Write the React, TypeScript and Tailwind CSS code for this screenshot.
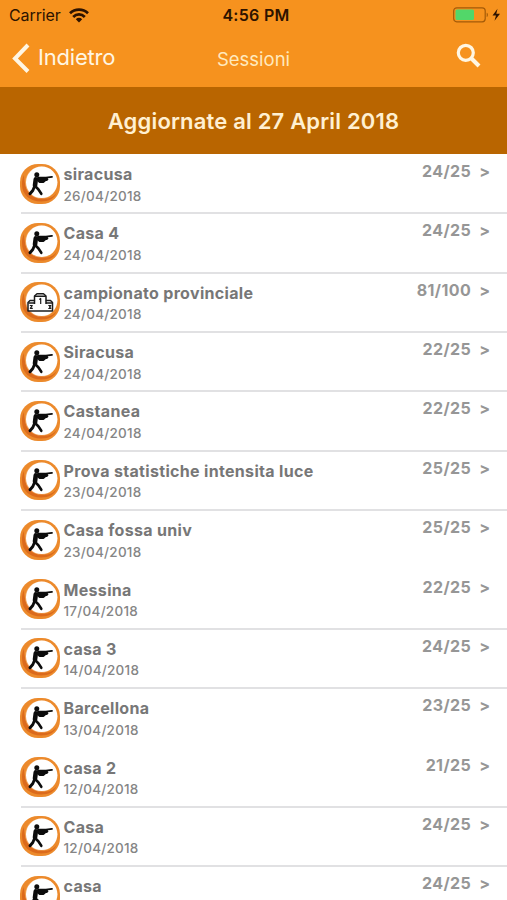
type Kind = "shooter" | "podium";

interface Session {
  name: string;
  date?: string;
  score: string;
  kind?: Kind;
  noLine?: boolean;
}

const sessions: Session[] = [
  { name: "siracusa", date: "26/04/2018", score: "24/25" },
  { name: "Casa 4", date: "24/04/2018", score: "24/25" },
  { name: "campionato provinciale", date: "24/04/2018", score: "81/100", kind: "podium" },
  { name: "Siracusa", date: "24/04/2018", score: "22/25" },
  { name: "Castanea", date: "24/04/2018", score: "22/25" },
  { name: "Prova statistiche intensita luce", date: "23/04/2018", score: "25/25" },
  { name: "Casa fossa univ", date: "23/04/2018", score: "25/25", noLine: true },
  { name: "Messina", date: "17/04/2018", score: "22/25" },
  { name: "casa 3", date: "14/04/2018", score: "24/25" },
  { name: "Barcellona", date: "13/04/2018", score: "23/25", noLine: true },
  { name: "casa 2", date: "12/04/2018", score: "21/25" },
  { name: "Casa", date: "12/04/2018", score: "24/25" },
  { name: "casa", score: "24/25" },
];

function SessionIcon({ kind = "shooter" }: { kind?: Kind }) {
  return (
    <svg viewBox="0 0 40 40" className="size-10 shrink-0">
      <rect x="0" y="0" width="40" height="40" rx="18" fill="#ec8a2c" />
      <path d="M4 11C4 27 13 34 26 34.500c5 0 9-2.500 11-6.500-2 6.500-8 9.500-16 9.500C10 37.500 2 31 2 20c0-3.500.7-6.500 2-9z" fill="#db6a1c" />
      <circle cx="21.300" cy="18.500" r="16.100" fill="#f3a55c" />
      <circle cx="21.700" cy="18.300" r="15.700" fill="#fff" />
      {kind === "shooter" ? (
        <g fill="none" stroke="#0c0c0c" strokeLinecap="round" strokeLinejoin="round">
          <circle cx="16.800" cy="10.700" r="2.500" fill="#0c0c0c" stroke="none" />
          <path d="M15.800 15.200L15 21.500" strokeWidth="4.600" />
          <path d="M14.500 22.500L12.800 26.500L10 29.800" strokeWidth="2.900" />
          <path d="M15.500 22.500L18.300 25.200L21.300 29.800" strokeWidth="2.600" />
          <path d="M17 15L19.500 17.800H23.500L26 15.500" strokeWidth="2.200" />
          <path d="M18 13.600H26L32 12.900" strokeWidth="1.800" />
          <path d="M18.500 15.200H26.500" strokeWidth="3.400" />
        </g>
      ) : (
        <g fill="#fff" stroke="#1c1c1c" strokeWidth="1.500" strokeLinejoin="round">
          <path d="M8 29V20.500L10 18.500H14.500V14L17 11.800H23.500L26 14V18.500H30.500L32.500 20.500V29Z" />
          <path d="M8.500 21H14.500M14.500 18.500V22M14.500 14.300H26M26 18.500V22M26 21H32" fill="none" />
          <path d="M19.300 17.500L20.700 16.500V22M9.800 23.500H12.300L10.300 26.300H12.800M28.300 23.500H30.800L29.500 25L30.800 26.500H28.300" fill="none" strokeWidth="1.200" />
        </g>
      )}
    </svg>
  );
}

function StatusBar() {
  return (
    <div className="flex h-[30px] items-center justify-between pr-1.5 pl-[9px] text-[#2d1300]">
      <div className="flex flex-1 items-center gap-2">
        <span className="text-base tracking-[-0.1px]">Carrier</span>
        <svg viewBox="0 0 20 15" className="h-[15px] w-5">
          <g fill="none" stroke="currentColor" strokeWidth="2.700">
            <path d="M1 5.300C6 .4 14 .4 19 5.300" />
            <path d="M4.200 9C7.500 5.600 12.500 5.600 15.800 9" />
          </g>
          <path d="M6.800 11.200C8.600 9.400 11.400 9.400 13.200 11.200L10 14.500Z" fill="currentColor" />
        </svg>
      </div>
      <span className="ml-0.5 text-center text-base font-semibold tracking-[0.3px]">4:56 PM</span>
      <div className="flex flex-1 justify-end">
        <svg viewBox="0 0 48 16" className="h-4 w-12">
          <rect x="0.700" y="0.800" width="31.500" height="14" rx="3" fill="none" stroke="#a35a08" strokeWidth="1.200" />
          <rect x="2.500" y="2.500" width="18.500" height="10.600" rx="1.500" fill="#52d769" />
          <path d="M33.700 5.700c1.600.5 1.600 3.700 0 4.200z" fill="#a35a08" />
          <path d="M44.500 1.800L39.500 8.500H43L41.500 13.800L47 6.800H43.300Z" fill="currentColor" />
        </svg>
      </div>
    </div>
  );
}

function NavBar() {
  return (
    <div className="flex h-[57px] items-center pr-[25px] pl-3 text-[#fff6e3]">
      <div className="flex flex-1 items-center gap-2 pb-0.5">
        <svg viewBox="0 0 18 30" className="h-[30px] w-[18px]">
          <path d="M16 2L3 15.500L16 28.500" fill="none" stroke="currentColor" strokeWidth="4" />
        </svg>
        <span className="text-[22px] tracking-[-0.2px]">Indietro</span>
      </div>
      <span className="ml-[13px] pt-0.5 text-center text-[18.5px] text-[#ffe9bd]">Sessioni</span>
      <div className="flex flex-1 justify-end pb-1.5">
        <svg viewBox="0 0 26 26" className="size-[26px]">
          <g fill="none" stroke="currentColor" strokeWidth="3.200">
            <circle cx="9.800" cy="9.800" r="7.500" />
            <path d="M15 15L23 23" strokeWidth="4" />
          </g>
        </svg>
      </div>
    </div>
  );
}

function SessionRow({ session }: { session: Session }) {
  return (
    <li className="flex h-[59.36px] shrink-0 pl-[19.5px]">
      <div className="pt-[8.5px]">
        <SessionIcon kind={session.kind} />
      </div>
      <div className="-ml-[38.5px] flex min-w-0 flex-1">
        <div className={`flex flex-1 justify-between pr-[17px] pl-[42.5px] ${session.noLine ? "" : "border-b-2 border-[#e1e1e3]"}`}>
          <div className="pt-[9px] whitespace-nowrap">
            <p className="text-base leading-5 font-bold tracking-[0.32px] text-[#777]">{session.name}</p>
            {session.date && (
              <p className="mt-[1.5px] text-[13.5px] leading-5 font-medium tracking-[0.25px] text-[#858585]">{session.date}</p>
            )}
          </div>
          <div className="flex gap-2 pt-1.5 text-base leading-5 font-bold text-[#969696]">
            <span className="tracking-[0.4px]">{session.score}</span>
            <span>&gt;</span>
          </div>
        </div>
      </div>
    </li>
  );
}

export default function App() {
  return (
    <div className="flex h-screen flex-col overflow-hidden bg-white font-['Inter',sans-serif]">
      <header className="shrink-0 bg-[#f6921e]">
        <StatusBar />
        <NavBar />
      </header>
      <h1 className="flex h-[67px] shrink-0 items-center justify-center bg-[#b96500] pt-0.5 text-[22px] font-semibold tracking-[0.18px] text-[#fff0d2]">
        Aggiornate al 27 April 2018
      </h1>
      <ul className="flex min-h-0 flex-1 flex-col overflow-hidden pt-px">
        {sessions.map((session, i) => (
          <SessionRow key={i} session={session} />
        ))}
      </ul>
    </div>
  );
}
